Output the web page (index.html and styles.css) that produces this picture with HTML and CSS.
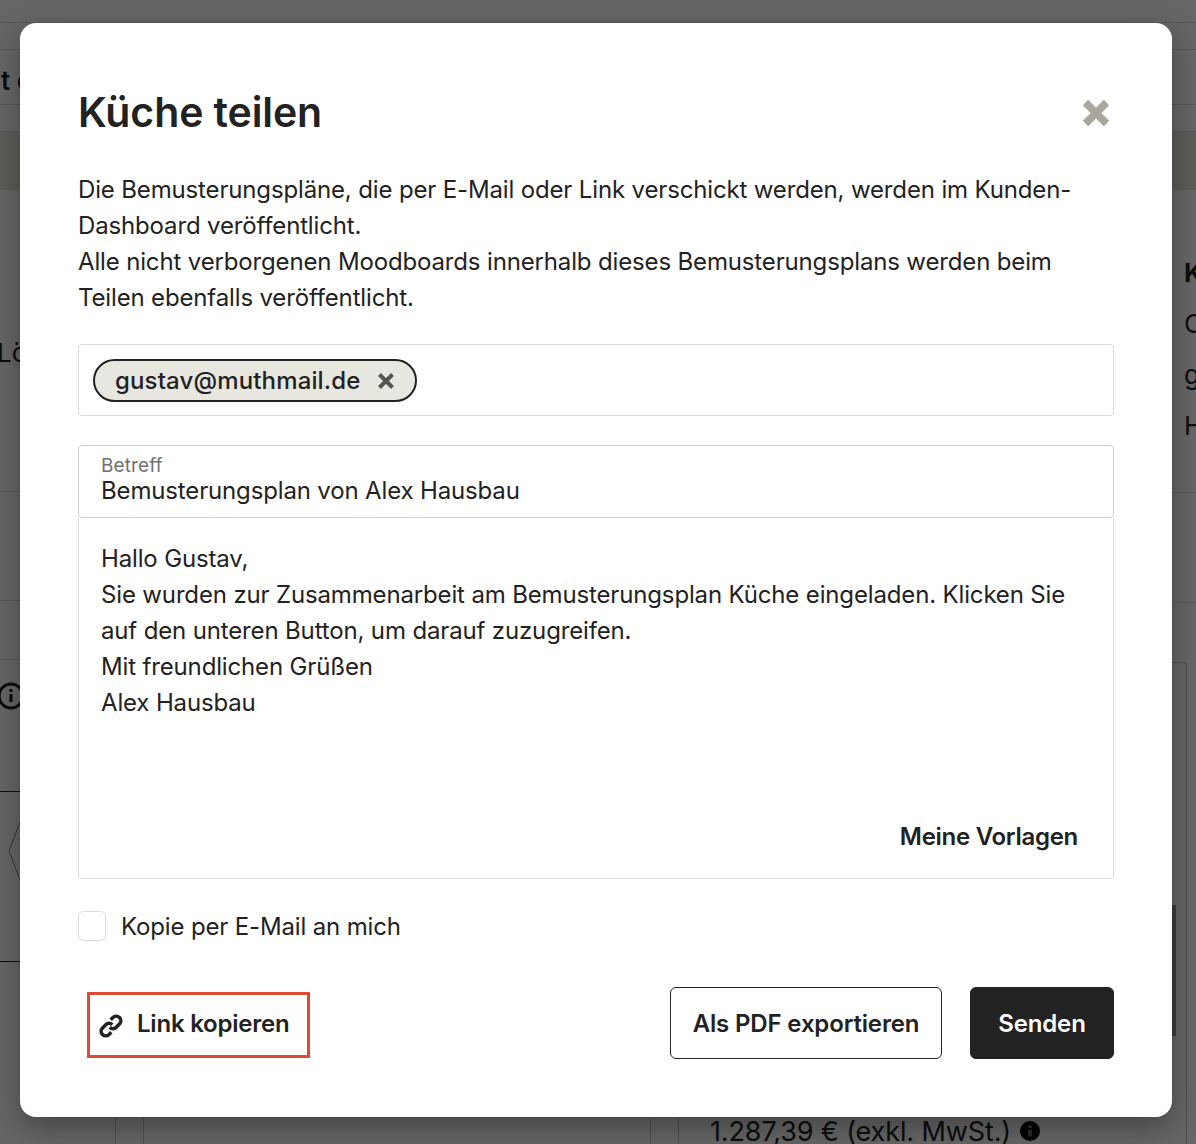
FILE: index.html
```html
<!DOCTYPE html>
<html lang="de">
<head>
<meta charset="utf-8">
<title>Küche teilen</title>
<link rel="stylesheet" href="styles.css">
</head>
<body>
<div class="page">
  <div class="bg-row bg-h23"></div>
  <div class="bg-row bg-h27"></div>
  <div class="bg-row bg-h55"><span class="bg-bar-text">t c</span></div>
  <div class="bg-row bg-h27"></div>
  <div class="bg-band"></div>
  <div class="bg-body">
    <div class="bg-left">
      <div class="bg-row bg-left-a"><span class="bg-lo">Lö</span></div>
      <div class="bg-row bg-left-b"></div>
      <div class="bg-row bg-left-c"></div>
      <div class="bg-left-card">
        <svg class="bg-circle" viewBox="0 0 28 28"><circle cx="14" cy="14" r="12" fill="none" stroke="#1f1f1f" stroke-width="3"/><rect x="12.5" y="12" width="3" height="8" fill="#1f1f1f"/><rect x="12.5" y="7" width="3" height="3" fill="#1f1f1f"/></svg>
      </div>
      <div class="bg-left-hex">
        <svg class="bg-hex" viewBox="0 0 12 60"><path d="M12 1 1 30l11 29" fill="none" stroke="#8a8a8a"/></svg>
      </div>
    </div>
    <div class="bg-middle">
      <div class="bg-bottom">
        <div class="bg-cell bg-cell-a"></div>
        <div class="bg-cell bg-cell-b"></div>
        <div class="bg-cell bg-cell-c"></div>
        <div class="bg-cell bg-cell-d"></div>
        <div class="bg-price">1.287,39 € (exkl. MwSt.)
          <svg class="bg-info" viewBox="0 0 20 20"><circle cx="10" cy="10" r="10" fill="#000"/><rect x="8" y="8.5" width="4" height="7" fill="#666"/><rect x="8" y="4.2" width="4" height="3" fill="#666"/></svg>
        </div>
      </div>
    </div>
    <div class="bg-right">
      <div class="bg-row bg-right-a">
        <div class="bg-right-title">K</div>
        <div class="bg-right-line">C</div>
        <div class="bg-right-line">g</div>
        <div class="bg-right-line">H</div>
      </div>
      <div class="bg-row bg-right-b"></div>
      <div class="bg-right-card"><div class="bg-right-bar"></div></div>
    </div>
  </div>
</div>

<div class="scrim"></div>

<section class="modal">
  <header class="modal-head">
    <h1 class="modal-title">Küche teilen</h1>
    <svg class="close" viewBox="0 0 30 30"><path d="M4.5 4.5 25.5 25.5M25.5 4.5 4.5 25.5" stroke="#a7a698" stroke-width="7.5" fill="none"/></svg>
  </header>
  <p class="intro">Die Bemusterungspläne, die per E-Mail oder Link verschickt werden, werden im Kunden-<br>Dashboard veröffentlicht.<br>Alle nicht verborgenen Moodboards innerhalb dieses Bemusterungsplans werden beim<br>Teilen ebenfalls veröffentlicht.</p>
  <div class="recipients">
    <span class="chip">gustav@muthmail.de
      <svg class="chip-x" viewBox="0 0 16 16"><path d="M1.5 1.5 14.5 14.5M14.5 1.5 1.5 14.5" stroke="#55544e" stroke-width="4" fill="none"/></svg>
    </span>
  </div>
  <div class="subject">
    <div class="subject-label">Betreff</div>
    <div class="subject-value">Bemusterungsplan von Alex Hausbau</div>
  </div>
  <div class="message">
    <div class="message-text">Hallo Gustav,<br>Sie wurden zur Zusammenarbeit am Bemusterungsplan Küche eingeladen. Klicken Sie<br>auf den unteren Button, um darauf zuzugreifen.<br>Mit freundlichen Grüßen<br>Alex Hausbau</div>
    <div class="templates">Meine Vorlagen</div>
  </div>
  <label class="copy">
    <span class="checkbox"></span>
    <span>Kopie per E-Mail an mich</span>
  </label>
  <footer class="actions">
    <button class="link-btn">
      <svg class="link-icon" viewBox="-1 -1 26 26"><g transform="rotate(-45 12 12)" fill="none" stroke="#222" stroke-width="3.8"><path d="M14 12a5 5 0 0 0-5-5H4a5 5 0 0 0 0 10h3.5"/><path d="M10 12a5 5 0 0 0 5 5h5a5 5 0 0 0 0-10h-3.5"/></g></svg>
      Link kopieren
    </button>
    <div class="actions-right">
      <button class="btn btn-outline">Als PDF exportieren</button>
      <button class="btn btn-solid">Senden</button>
    </div>
  </footer>
</section>
</body>
</html>
```
FILE: styles.css
```css
* { box-sizing: border-box; }
html, body { margin: 0; height: 100%; }
body {
  width: 1196px;
  height: 1144px;
  overflow: hidden;
  position: relative;
  background: #fff;
  font-family: "Inter", "Noto Sans", sans-serif;
  color: #222;
}

/* dimmed page behind the dialog */
.page { height: 1144px; overflow: hidden; background: #fff; color: #222; display: flex; flex-direction: column; }
.bg-row { border-bottom: 1px solid #dcdcdc; flex: none; }
.bg-h23 { height: 23px; }
.bg-h27 { height: 27px; }
.bg-h55 { height: 55px; padding-top: 15px; }
.bg-bar-text { display: block; margin-left: 1px; font-size: 26px; line-height: 32px; font-weight: 600; white-space: nowrap; }
.bg-band { height: 58px; flex: none; background: #e9e7dd; }
.bg-body { flex: 1; display: flex; min-height: 0; }
.bg-left { width: 30px; flex: none; display: flex; flex-direction: column; }
.bg-left-a { height: 302px; padding-top: 145px; overflow: visible; }
.bg-lo { display: block; margin-left: -3px; font-size: 26px; line-height: 36px; white-space: nowrap; }
.bg-left-b { height: 109px; }
.bg-left-c { height: 59px; }
.bg-left-card { height: 132px; padding: 22px 0 0 0; border-bottom: 1px solid #222; }
.bg-circle { display: block; width: 28px; height: 28px; margin-left: -3px; }
.bg-left-hex { height: 170px; padding: 29px 0 0 8px; border-bottom: 1px solid #222; }
.bg-hex { display: block; width: 12px; height: 60px; }
.bg-middle { flex: 1; display: flex; flex-direction: column; justify-content: flex-end; min-width: 0; }
.bg-bottom { height: 31px; display: flex; align-items: flex-start; overflow: hidden; }
.bg-cell { height: 31px; flex: none; border-right: 1px solid #c9c9c9; }
.bg-cell-a { width: 86px; }
.bg-cell-b { width: 28px; }
.bg-cell-c { width: 507px; }
.bg-cell-d { width: 28px; }
.bg-price { margin-left: 31px; height: 36px; display: flex; align-items: center; gap: 9px; font-size: 27px; letter-spacing: -.12px; white-space: nowrap; }
.bg-info { width: 20px; height: 20px; flex: none; }
.bg-right { width: 24px; flex: none; display: flex; flex-direction: column; }
.bg-right-a { height: 303px; padding: 65px 0 0 12px; font-size: 26px; }
.bg-right-title { font-weight: 700; line-height: 36px; margin-bottom: 7px; }
.bg-right-line { line-height: 51px; }
.bg-right-b { height: 110px; }
.bg-right-card { margin-top: 59px; width: 15px; flex: 1; border-top: 1px solid #c4c4c4; border-right: 1px solid #c4c4c4; border-radius: 0 4px 0 0; }
.bg-right-bar { width: 4px; height: 131px; margin-top: 242px; background: #9a9a9a; }
.scrim { position: absolute; inset: 0; background: rgba(0,0,0,.6); }

/* dialog */
.modal {
  position: absolute;
  left: 20px;
  top: 23px;
  width: 1152px;
  height: 1094px;
  background: #fff;
  border-radius: 16px;
  padding: 58px 58px 0;
  box-shadow: 0 10px 30px rgba(0,0,0,.35);
  letter-spacing: -.15px;
}
.modal-head { display: flex; justify-content: space-between; align-items: center; height: 62px; }
.modal-title { margin: 0; font-size: 41px; line-height: 62px; font-weight: 600; letter-spacing: -.1px; color: #222; }
.close { width: 30px; height: 30px; margin: 2px 3px 0 0; }
.intro { margin: 29px 0 28px; font-size: 24px; line-height: 36px; color: #222; }
.recipients {
  height: 72px;
  border: 1px solid #dcdcd8;
  border-radius: 4px;
  padding: 14px;
  display: flex;
  align-items: flex-start;
}
.chip {
  height: 43px;
  border: 2px solid #222;
  border-radius: 22px;
  background: #e8e7df;
  display: inline-flex;
  align-items: center;
  gap: 18px;
  padding: 0 21px 0 20px;
  font-size: 24px;
  font-weight: 550;
  letter-spacing: .15px;
}
.chip-x { width: 16px; height: 16px; }
.subject {
  margin-top: 29px;
  height: 73px;
  border: 1px solid #cfcfcb;
  border-radius: 4px;
  padding: 9px 22px 0;
}
.subject-label { font-size: 19px; line-height: 22px; letter-spacing: .1px; color: #707070; }
.subject-value { font-size: 24px; line-height: 28px; }
.message {
  height: 361px;
  border: 1px solid #dcdcd8;
  border-top: 0;
  border-radius: 0 0 4px 4px;
  padding: 23px 35px 0 22px;
  display: flex;
  flex-direction: column;
  justify-content: space-between;
}
.message-text { font-size: 24px; line-height: 36px; }
.templates { align-self: flex-end; font-size: 24px; font-weight: 600; letter-spacing: -.28px; line-height: 36px; margin-bottom: 23px; }
.copy { display: flex; align-items: center; gap: 15px; margin-top: 32px; height: 30px; font-size: 24px; }
.checkbox { width: 28px; height: 30px; border: 1px solid #dcdcd8; border-radius: 5px; }
.actions { display: flex; justify-content: space-between; align-items: flex-start; margin-top: 46px; height: 72px; }
.actions-right { display: flex; gap: 28px; }
button { font: inherit; cursor: pointer; }
.link-btn {
  margin: 5px 0 0 9px;
  height: 66px;
  width: 223px;
  border: 3px solid #e04a32;
  background: #fff;
  color: #222;
  display: flex;
  align-items: center;
  gap: 14px;
  padding: 0 0 4px 9px;
  font-size: 24px;
  font-weight: 600;
  letter-spacing: -.22px;
}
.link-icon { width: 24px; height: 24px; flex: none; margin-top: 5px; }
.btn { height: 72px; border-radius: 6px; font-size: 24px; font-weight: 600; letter-spacing: -.16px; border: 1px solid #222; }
.btn-outline { width: 272px; background: #fff; color: #222; }
.btn-solid { width: 144px; background: #222; color: #fff; }
```
